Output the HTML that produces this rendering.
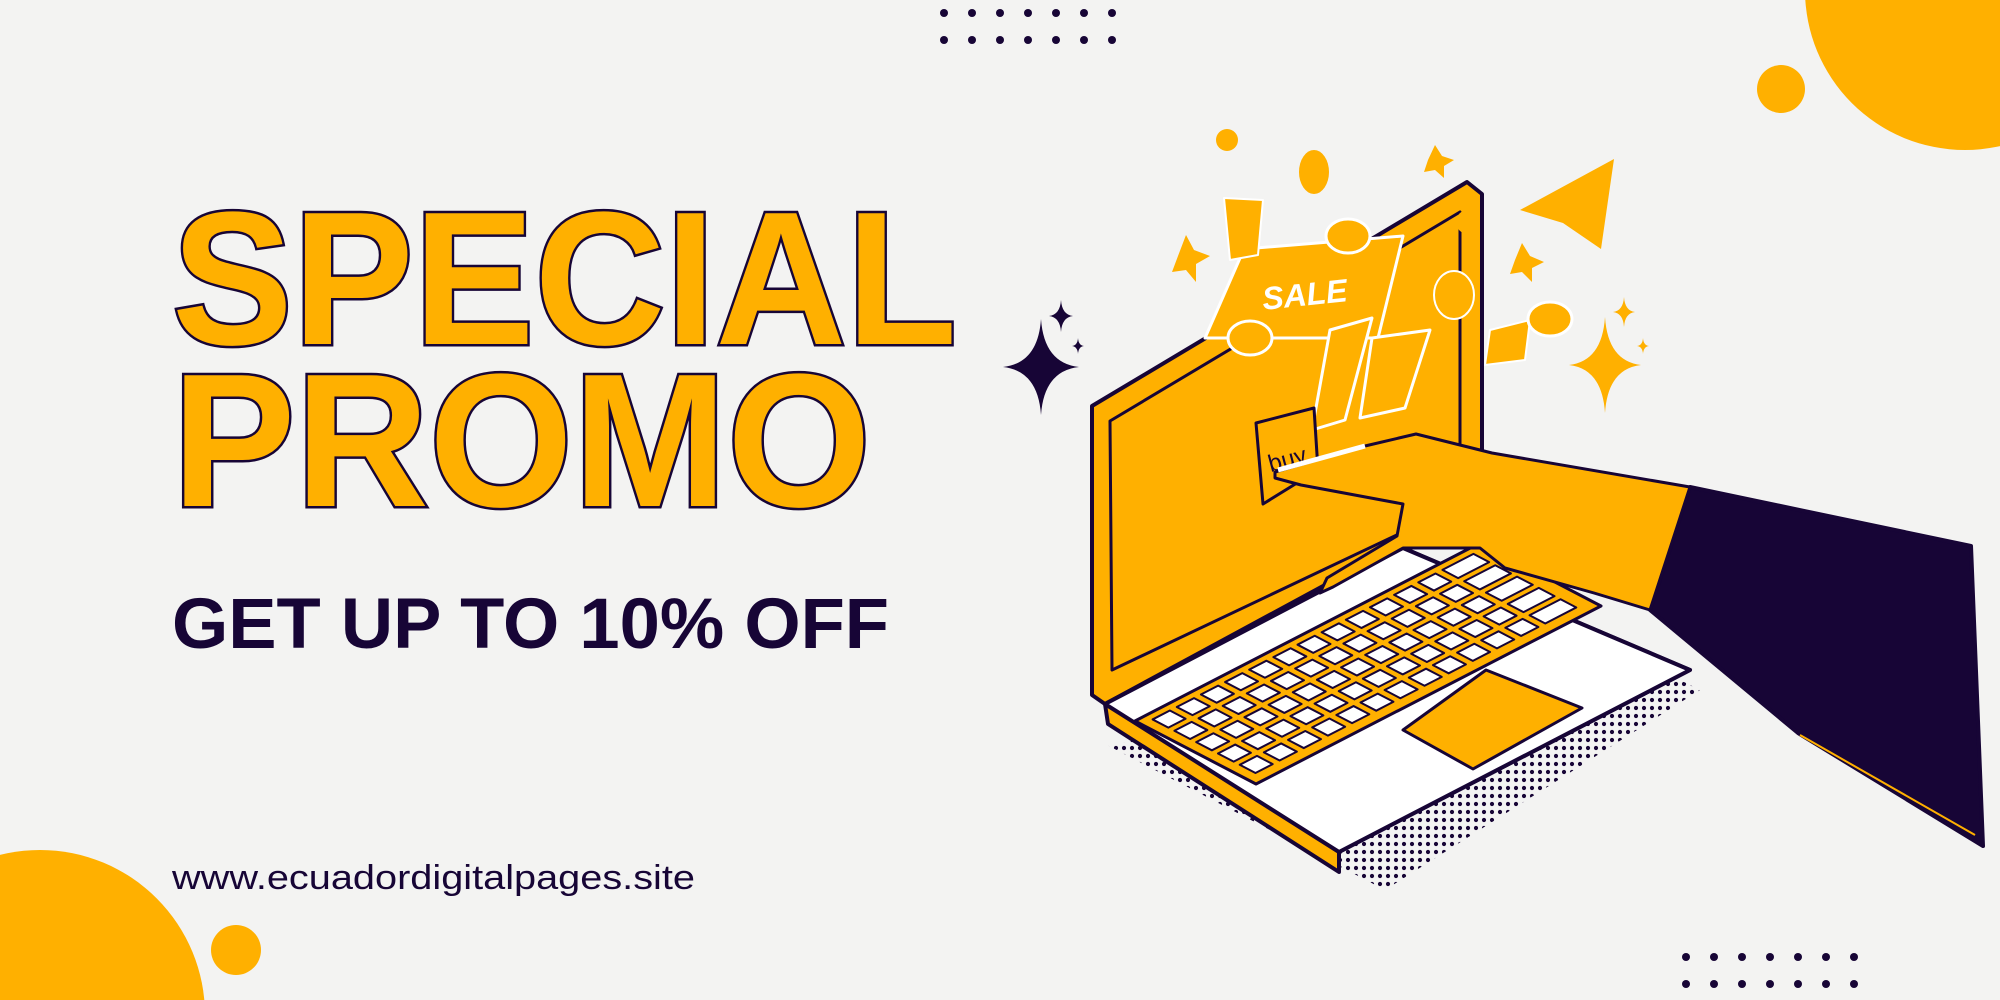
<!DOCTYPE html>
<html><head><meta charset="utf-8"><style>
html,body{margin:0;padding:0;width:2000px;height:1000px;overflow:hidden;background:#f3f3f2}
svg{display:block}
</style></head><body>
<svg width="2000" height="1000" viewBox="0 0 2000 1000" xmlns="http://www.w3.org/2000/svg">
<defs>
<pattern id="dots" width="8" height="8" patternUnits="userSpaceOnUse"><circle cx="4" cy="4" r="2.1" fill="#170536"/></pattern>
<g id="sp"><path d="M0,-1 Q0.08,-0.08 1,0 Q0.08,0.08 0,1 Q-0.08,0.08 -1,0 Q-0.08,-0.08 0,-1Z"/></g>
</defs>
<rect width="2000" height="1000" fill="#f3f3f2"/>
<circle cx="1965" cy="-10" r="160" fill="#ffb000"/>
<circle cx="1781" cy="89" r="24" fill="#ffb000"/>
<circle cx="40" cy="1015" r="165" fill="#ffb000"/>
<circle cx="236" cy="950" r="25" fill="#ffb000"/>
<g fill="#170536">
<g id="r1"><circle cx="944" cy="13" r="4"/><circle cx="972" cy="13" r="4"/><circle cx="1000" cy="13" r="4"/><circle cx="1028" cy="13" r="4"/><circle cx="1056" cy="13" r="4"/><circle cx="1084" cy="13" r="4"/><circle cx="1112" cy="13" r="4"/></g>
<use href="#r1" y="27"/>
<use href="#r1" x="742" y="944"/>
<use href="#r1" x="742" y="971"/>
</g>
<g font-family="'Liberation Sans',Arial,sans-serif" font-weight="bold">
<text x="172" y="344" font-size="190" textLength="785" lengthAdjust="spacingAndGlyphs" fill="#ffb000" stroke="#170536" stroke-width="5" paint-order="stroke">SPECIAL</text>
<text x="172" y="506" font-size="190" textLength="699" lengthAdjust="spacingAndGlyphs" fill="#ffb000" stroke="#170536" stroke-width="5" paint-order="stroke">PROMO</text>
<text x="172" y="648" font-size="71" textLength="717" lengthAdjust="spacingAndGlyphs" fill="#170536">GET UP TO 10% OFF</text>
</g>
<text x="172" y="889" font-family="'Liberation Sans',Arial,sans-serif" font-size="34" textLength="523" lengthAdjust="spacingAndGlyphs" fill="#170536">www.ecuadordigitalpages.site</text>

<g stroke="#170536" stroke-width="4" stroke-linejoin="round">
<polygon points="1107,745 1385,890 1700,690 1640,660" fill="url(#dots)" stroke="none"/>
<polygon points="1092,406 1467,182 1482,194 1482,500 1105,704 1092,695" fill="#ffb000"/>
<polygon points="1110,421 1460,212 1460,505 1112,670" fill="#ffb000" stroke-width="3"/>
<polygon points="1105,704 1403,548 1690,670 1339,852 1339,872 1108,724" fill="#ffb000"/>
<polygon points="1105,704 1403,548 1690,670 1339,852" fill="#ffffff"/>
<polygon points="1135,721 1480,543 1601,606 1256,784" fill="#ffb000" stroke-width="3"/>
<g transform="matrix(345,-178,121,63,1135,721)" fill="#fff" stroke="#170536" stroke-width="2">
<g id="krow">
<rect x="0.03" y="0.06" width="0.05" height="0.13" vector-effect="non-scaling-stroke"/><rect x="0.1" y="0.06" width="0.05" height="0.13" vector-effect="non-scaling-stroke"/><rect x="0.17" y="0.06" width="0.05" height="0.13" vector-effect="non-scaling-stroke"/><rect x="0.24" y="0.06" width="0.05" height="0.13" vector-effect="non-scaling-stroke"/><rect x="0.31" y="0.06" width="0.05" height="0.13" vector-effect="non-scaling-stroke"/><rect x="0.38" y="0.06" width="0.05" height="0.13" vector-effect="non-scaling-stroke"/><rect x="0.45" y="0.06" width="0.05" height="0.13" vector-effect="non-scaling-stroke"/><rect x="0.52" y="0.06" width="0.05" height="0.13" vector-effect="non-scaling-stroke"/><rect x="0.59" y="0.06" width="0.05" height="0.13" vector-effect="non-scaling-stroke"/><rect x="0.66" y="0.06" width="0.05" height="0.13" vector-effect="non-scaling-stroke"/><rect x="0.73" y="0.06" width="0.05" height="0.13" vector-effect="non-scaling-stroke"/><rect x="0.8" y="0.06" width="0.05" height="0.13" vector-effect="non-scaling-stroke"/><rect x="0.87" y="0.06" width="0.09" height="0.13" vector-effect="non-scaling-stroke"/>
</g>
<use href="#krow" y="0.18"/><use href="#krow" y="0.36"/><use href="#krow" y="0.54"/><use href="#krow" y="0.72"/>
</g>
<polygon points="1403,730 1486,670 1582,708 1473,769" fill="#ffb000" stroke-width="3"/>
<polygon points="1244,249 1403,236 1378,338 1205,338" fill="#ffb000" stroke="#fff" stroke-width="3"/>
<text x="1262" y="306" font-family="'Liberation Sans',Arial,sans-serif" font-size="32" font-style="italic" font-weight="bold" fill="#fff" stroke="none" transform="rotate(-6 1300 295)">SALE</text>
<polygon points="1224,198 1263,200 1258,255 1230,260" fill="#ffb000" stroke="#fff" stroke-width="2"/>
<polygon points="1330,330 1372,318 1345,420 1312,430" fill="#ffb000" stroke="#fff" stroke-width="3"/>
<polygon points="1372,338 1430,330 1405,408 1360,418" fill="#ffb000" stroke="#fff" stroke-width="3"/>
<polygon points="1490,330 1530,320 1525,360 1485,365" fill="#ffb000" stroke="#fff" stroke-width="2"/>
<ellipse cx="1250" cy="338" rx="22" ry="17" fill="#ffb000" stroke="#fff" stroke-width="3"/>
<ellipse cx="1348" cy="236" rx="22" ry="17" fill="#ffb000" stroke="#fff" stroke-width="3"/>
<ellipse cx="1550" cy="319" rx="22" ry="17" fill="#ffb000" stroke="#fff" stroke-width="3"/>
<ellipse cx="1454" cy="295" rx="20" ry="24" fill="#ffb000" stroke="#fff" stroke-width="2"/>
<ellipse cx="1314" cy="172" rx="15" ry="22" fill="#ffb000" stroke="none"/>
<circle cx="1227" cy="140" r="11" fill="#ffb000" stroke="none"/>
<circle cx="1468" cy="222" r="12" fill="#ffb000" stroke="none"/>
<polygon points="1520,210 1614,159 1601,249 1563,223" fill="#ffb000" stroke="none"/>
<polygon points="1186,235 1194,250 1210,256 1196,264 1196,282 1186,270 1172,272 1178,256" fill="#ffb000" stroke="none"/>
<polygon points="1522,243 1530,256 1544,262 1532,268 1532,282 1522,272 1510,274 1515,260" fill="#ffb000" stroke="none"/>
<polygon points="1435,145 1442,156 1454,160 1444,166 1444,178 1435,170 1424,172 1428,160" fill="#ffb000" stroke="none"/>
<polygon points="1256,423 1314,408 1318,470 1263,504" fill="#ffb000" stroke-width="3"/>
<text x="1268" y="468" font-family="'Liberation Sans',Arial,sans-serif" font-size="24" fill="#170536" stroke="none" transform="rotate(-15 1285 460)">buy</text>
<polygon points="1690,487 1971,546 1983,846 1798,733 1650,610" fill="#170536"/>
<line x1="1800" y1="735" x2="1975" y2="835" stroke="#ffb000" stroke-width="2"/>
<path d="M1275,472 L1365,446 L1416,434 L1492,453 L1690,487 L1650,610 L1594,593 L1505,568 L1480,548 L1403,548 L1333,587 L1320,593 L1327,578 L1397,536 L1403,504 L1301,485 L1275,478 Z" fill="#ffb000" stroke-width="3"/>
<path d="M1278,470 L1365,446" stroke="#fff" stroke-width="5"/>
</g>
<g fill="#170536"><use href="#sp" transform="translate(1041,367) scale(38,48)"/><use href="#sp" transform="translate(1061,316) scale(12,16)"/><use href="#sp" transform="translate(1078,346) scale(6,8)"/></g>
<g fill="#ffb000"><use href="#sp" transform="translate(1605,365) scale(36,48)"/><use href="#sp" transform="translate(1624,312) scale(11,15)"/><use href="#sp" transform="translate(1643,346) scale(6,8)"/></g>
</svg>
</body></html>
